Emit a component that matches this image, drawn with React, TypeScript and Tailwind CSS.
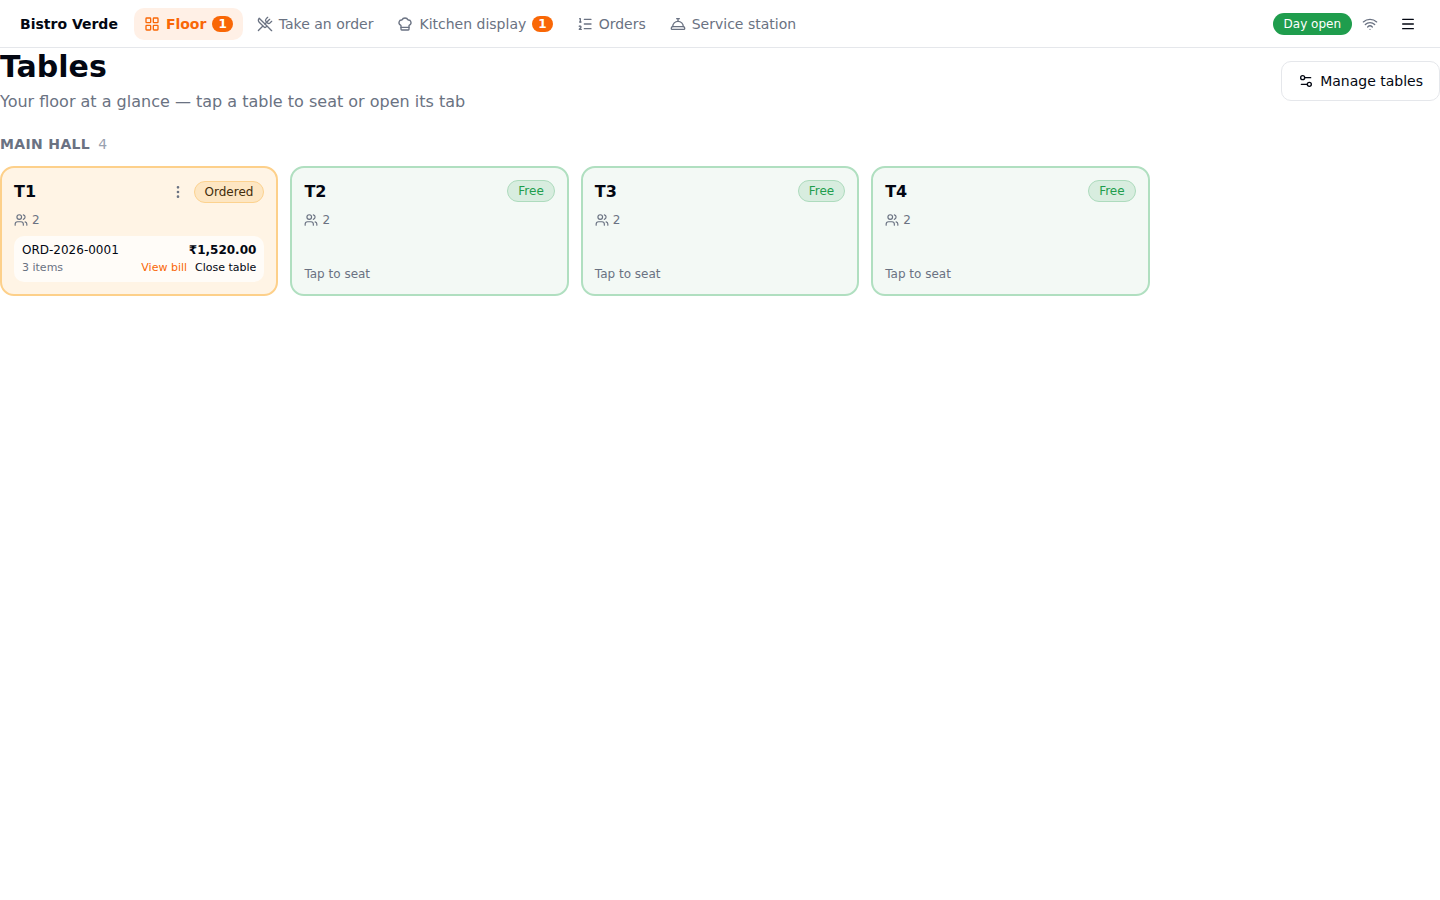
import {
  ChefHat,
  ConciergeBell,
  EllipsisVertical,
  LayoutGrid,
  ListOrdered,
  Menu,
  Settings2,
  Users,
  UtensilsCrossed,
  Wifi,
  type LucideIcon,
} from 'lucide-react';
import { clsx } from 'clsx';

interface NavItem {
  label: string;
  icon: LucideIcon;
  count?: number;
  active?: boolean;
}

interface Order {
  number: string;
  total: string;
  items: number;
}

interface Table {
  name: string;
  seats: number;
  order?: Order;
}

const navItems: NavItem[] = [
  { label: 'Floor', icon: LayoutGrid, count: 1, active: true },
  { label: 'Take an order', icon: UtensilsCrossed },
  { label: 'Kitchen display', icon: ChefHat, count: 1 },
  { label: 'Orders', icon: ListOrdered },
  { label: 'Service station', icon: ConciergeBell },
];

const tables: Table[] = [
  { name: 'T1', seats: 2, order: { number: 'ORD-2026-0001', total: '₹1,520.00', items: 3 } },
  { name: 'T2', seats: 2 },
  { name: 'T3', seats: 2 },
  { name: 'T4', seats: 2 },
];

const TopBar = () => (
  <header className="flex h-12 items-center border-b border-gray-200 pr-3 pl-5">
    <span className="mr-4 text-sm font-bold">Bistro Verde</span>
    <nav className="flex flex-1 items-center gap-1">
      {navItems.map(({ label, icon: Icon, count, active }) => (
        <a
          key={label}
          href="#"
          aria-current={active ? 'page' : undefined}
          className={clsx(
            'flex h-8 items-center gap-1.5 rounded-[10px] px-2.5 text-sm whitespace-nowrap',
            active ? 'bg-[#fff0e6] font-bold text-[#f96706]' : 'text-gray-500 hover:bg-gray-100'
          )}
        >
          <Icon className="size-4" />
          {label}
          {count && (
            <span className="flex h-4 items-center rounded-full bg-[#f96706] px-1.5 text-xs font-bold text-white">
              {count}
            </span>
          )}
        </a>
      ))}
    </nav>
    <div className="flex items-center gap-2.5">
      <span className="rounded-full border border-transparent bg-[#1f9d4d] px-2.5 py-0.5 text-xs text-white">
        Day open
      </span>
      <Wifi className="size-4 text-gray-500" />
      <button type="button" aria-label="Menu" className="flex size-10 items-center justify-center">
        <Menu className="size-4" />
      </button>
    </div>
  </header>
);

const Seats = ({ count }: { count: number }) => (
  <span className="mt-2 flex items-center gap-1 text-xs text-gray-500">
    <Users className="size-3.5" />
    {count}
  </span>
);

const FreeTable = ({ table }: { table: Table }) => (
  <button
    type="button"
    className="flex min-h-[130px] flex-col rounded-[14px] border-2 border-[#b0dfc0] bg-[#f3f9f5] p-3 text-left"
  >
    <span className="flex w-full items-start justify-between">
      <span className="font-bold">{table.name}</span>
      <span className="rounded-full border border-[#addbbd] bg-[#d8eddf] px-2.5 py-0.5 text-xs text-[#1f9d4d]">
        Free
      </span>
    </span>
    <Seats count={table.seats} />
    <span className="mt-auto text-xs text-gray-500">Tap to seat</span>
  </button>
);

const OrderedTable = ({ table, order }: { table: Table; order: Order }) => (
  <div className="flex min-h-[130px] flex-col rounded-[14px] border-2 border-[#fdd08a] bg-[#fff4e5] p-3">
    <div className="flex items-center justify-between">
      <span className="font-bold">{table.name}</span>
      <div className="flex items-center gap-1">
        <button
          type="button"
          aria-label="Table actions"
          className="flex size-6 items-center justify-center text-gray-500"
        >
          <EllipsisVertical className="size-4" />
        </button>
        <span className="rounded-full border border-[#fcd28f] bg-[#fde6c3] px-2.5 py-0.5 text-xs text-[#422c0b]">
          Ordered
        </span>
      </div>
    </div>
    <Seats count={table.seats} />
    <div className="mt-2 rounded-[10px] bg-[#fffcf8] px-2 py-1.5">
      <div className="flex justify-between text-xs">
        <span>{order.number}</span>
        <span className="font-bold">{order.total}</span>
      </div>
      <div className="mt-0.5 flex justify-between text-[11px] leading-4">
        <span className="text-gray-500">{order.items} items</span>
        <div className="flex gap-2">
          <button type="button" className="text-[#f96706]">
            View bill
          </button>
          <button type="button">Close table</button>
        </div>
      </div>
    </div>
  </div>
);

export default function App() {
  return (
    <div className="min-h-screen bg-white font-['DejaVu_Sans',sans-serif] text-[#030712]">
      <TopBar />
      <main>
        <div className="flex items-center justify-between">
          <div>
            <h1 className="text-3xl leading-[38px] font-bold">Tables</h1>
            <p className="mt-1 text-gray-500">
              Your floor at a glance — tap a table to seat or open its tab
            </p>
          </div>
          <button
            type="button"
            className="flex h-10 items-center gap-1.5 rounded-[10px] border border-gray-200 px-4 text-sm"
          >
            <Settings2 className="size-4" />
            Manage tables
          </button>
        </div>

        <section className="mt-5">
          <h2 className="flex items-center gap-2 text-sm font-bold tracking-wide text-gray-500 uppercase">
            Main hall
            <span className="font-normal text-gray-400">{tables.length}</span>
          </h2>
          <div className="mt-3 grid grid-cols-2 gap-3 md:grid-cols-3 lg:grid-cols-4 xl:grid-cols-5">
            {tables.map((table) =>
              table.order ? (
                <OrderedTable key={table.name} table={table} order={table.order} />
              ) : (
                <FreeTable key={table.name} table={table} />
              )
            )}
          </div>
        </section>
      </main>
    </div>
  );
}
